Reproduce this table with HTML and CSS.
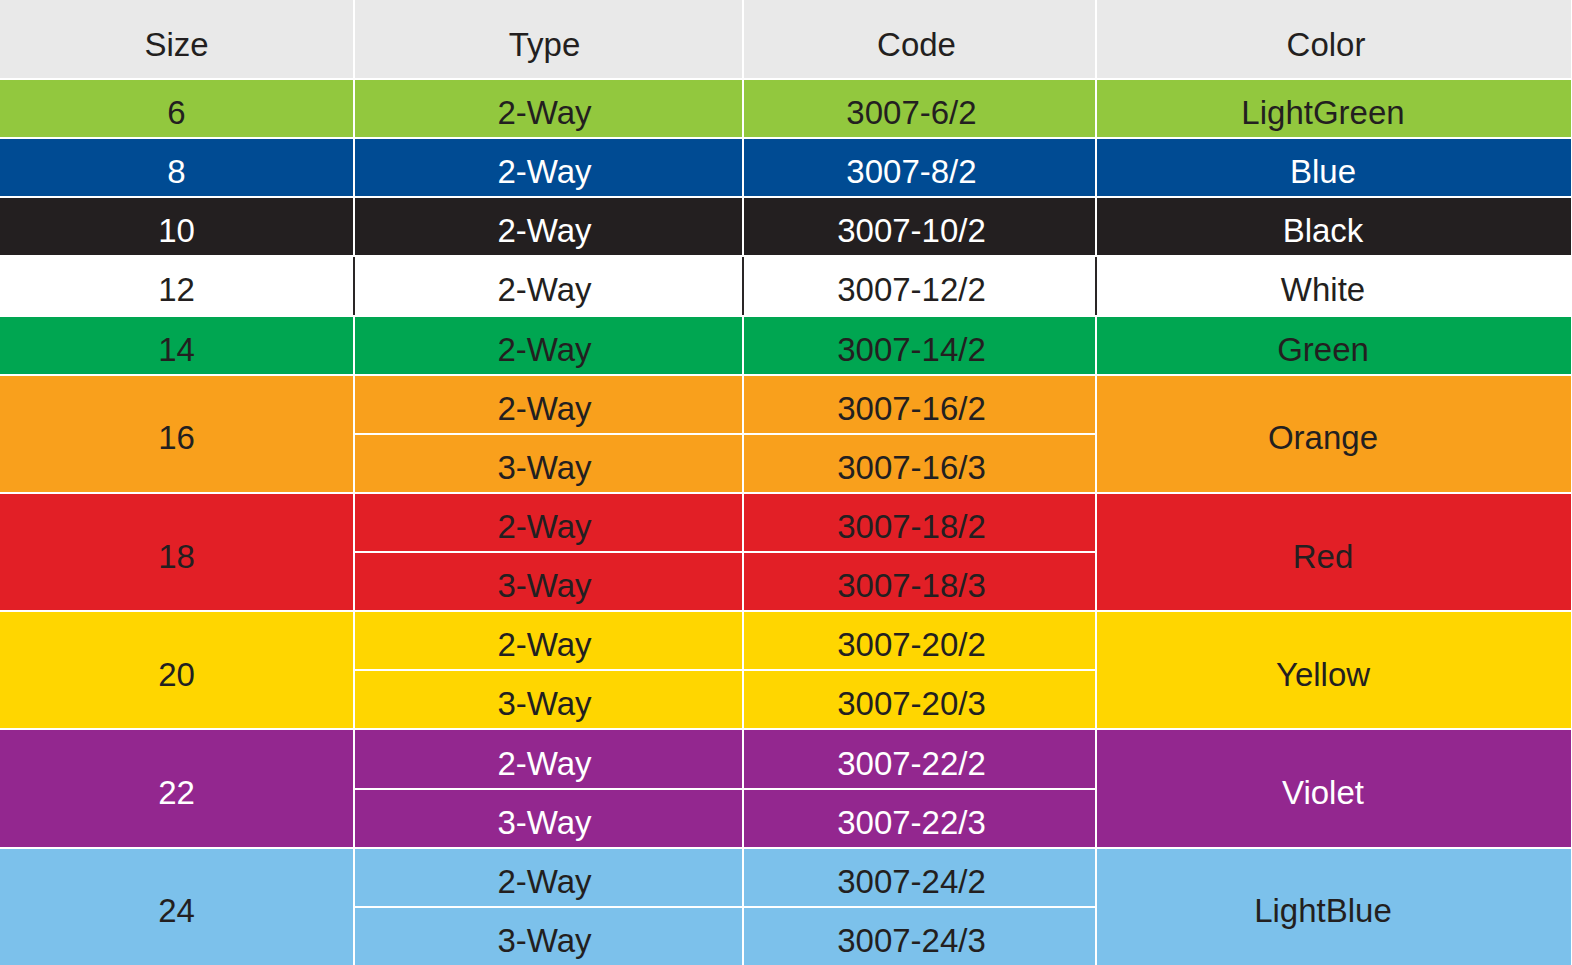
FILE: index.html
```html
<!DOCTYPE html>
<html lang="en">
<head>
<meta charset="utf-8">
<title>Connector sizes</title>
<link rel="stylesheet" href="styles.css">
</head>
<body>
<div class="table">
  <div class="cell head c-size">Size</div>
  <div class="cell head c-type">Type</div>
  <div class="cell head c-code">Code</div>
  <div class="cell head c-color">Color</div>

  <div class="cell lgreen c-size">6</div>
  <div class="cell lgreen c-type">2-Way</div>
  <div class="cell lgreen c-code">3007-6/2</div>
  <div class="cell lgreen c-color">LightGreen</div>

  <div class="cell blue c-size">8</div>
  <div class="cell blue c-type">2-Way</div>
  <div class="cell blue c-code">3007-8/2</div>
  <div class="cell blue c-color">Blue</div>

  <div class="cell black c-size">10</div>
  <div class="cell black c-type">2-Way</div>
  <div class="cell black c-code">3007-10/2</div>
  <div class="cell black c-color">Black</div>

  <div class="cell white c-size">12</div>
  <div class="cell white c-type">2-Way</div>
  <div class="cell white c-code">3007-12/2</div>
  <div class="cell white c-color">White</div>

  <div class="cell green c-size">14</div>
  <div class="cell green c-type">2-Way</div>
  <div class="cell green c-code">3007-14/2</div>
  <div class="cell green c-color">Green</div>

  <div class="cell orange c-size span2">16</div>
  <div class="cell orange c-type">2-Way</div>
  <div class="cell orange c-code">3007-16/2</div>
  <div class="cell orange c-color span2">Orange</div>
  <div class="cell orange c-type">3-Way</div>
  <div class="cell orange c-code">3007-16/3</div>

  <div class="cell red c-size span2">18</div>
  <div class="cell red c-type">2-Way</div>
  <div class="cell red c-code">3007-18/2</div>
  <div class="cell red c-color span2">Red</div>
  <div class="cell red c-type">3-Way</div>
  <div class="cell red c-code">3007-18/3</div>

  <div class="cell yellow c-size span2">20</div>
  <div class="cell yellow c-type">2-Way</div>
  <div class="cell yellow c-code">3007-20/2</div>
  <div class="cell yellow c-color span2">Yellow</div>
  <div class="cell yellow c-type">3-Way</div>
  <div class="cell yellow c-code">3007-20/3</div>

  <div class="cell violet c-size span2">22</div>
  <div class="cell violet c-type">2-Way</div>
  <div class="cell violet c-code">3007-22/2</div>
  <div class="cell violet c-color span2">Violet</div>
  <div class="cell violet c-type">3-Way</div>
  <div class="cell violet c-code">3007-22/3</div>

  <div class="cell lblue c-size span2">24</div>
  <div class="cell lblue c-type">2-Way</div>
  <div class="cell lblue c-code">3007-24/2</div>
  <div class="cell lblue c-color span2">LightBlue</div>
  <div class="cell lblue c-type">3-Way</div>
  <div class="cell lblue c-code">3007-24/3</div>
</div>
</body>
</html>
```

FILE: styles.css
```css
html, body {
  margin: 0;
  padding: 0;
  background: #ffffff;
}

body {
  font-family: "Liberation Sans", Arial, sans-serif;
  color: #231f20;
  overflow: hidden;
}

.table {
  display: grid;
  width: 1571px;
  height: 965px;
  grid-template-columns: 353px 387px 351px 474px;
  grid-template-rows: 78px repeat(15, 1fr);
  gap: 2px;
  background: #ffffff;
}

.cell {
  display: flex;
  align-items: center;
  justify-content: center;
  font-size: 33px;
  line-height: 1;
  padding-top: 8px;
  box-sizing: border-box;
  white-space: nowrap;
}

.span2 {
  grid-row: span 2;
}

.c-type { padding-right: 8px; }
.c-code { padding-right: 16px; }
.c-color { padding-right: 22px; }

.head {
  background: #e9e9e9;
  padding-top: 10px;
}
.head.c-color { padding-right: 16px; }
.head.c-code { padding-right: 6px; }

.lgreen { background: #92c83e; }
.blue   { background: #004b93; color: #ffffff; }
.black  { background: #231f20; color: #ffffff; }
.white  { background: #ffffff; }
.white + .white { box-shadow: -2px 0 0 #2a2627; }
.green  { background: #00a651; }
.orange { background: #f9a01c; }
.red    { background: #e21f26; }
.yellow { background: #ffd600; }
.violet { background: #93278f; color: #ffffff; }
.lblue  { background: #7cc1eb; }
```
